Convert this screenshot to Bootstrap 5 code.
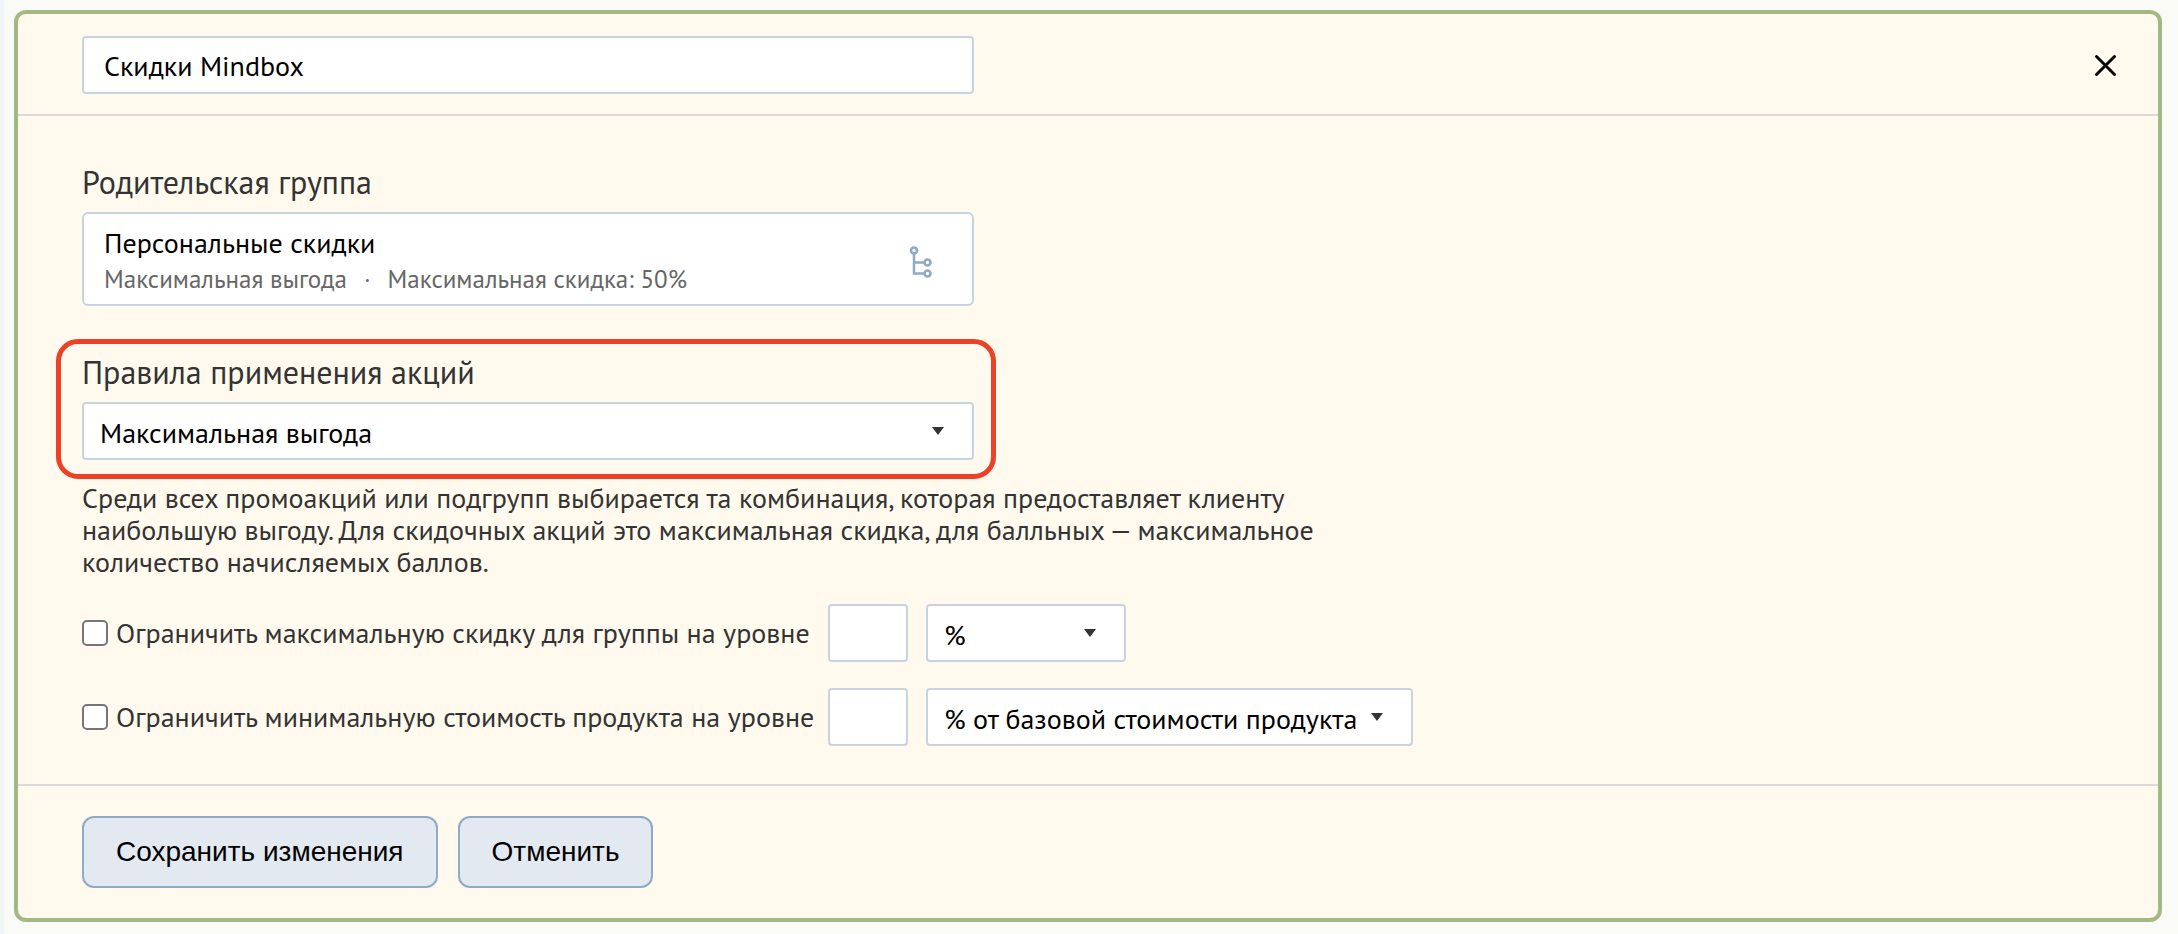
<!DOCTYPE html>
<html lang="ru">
<head>
<meta charset="utf-8">
<meta name="viewport" content="width=device-width, initial-scale=1">
<title>Скидки Mindbox</title>
<link href="https://cdn.jsdelivr.net/npm/bootstrap@5.3.0/dist/css/bootstrap.min.css" rel="stylesheet">
<style>
  body {
    background: #fafbf6;
    color: #333;
    font-family: "PT Sans", Roboto, "Noto Sans", sans-serif;
    font-size: 28px;
    line-height: 32px;
    border-left: 4px solid #f0f4f7;
    padding: 10px 16px 12px 10px;
  }
  .group-card {
    background: #fffaed;
    border: 4px solid #a4b885;
    border-radius: 12px;
  }
  .group-header { padding: 22px 36px 20px 64px; border-bottom: 2px solid #d9d9d9; }
  .group-body { padding: 48px 64px 38px; }
  .group-footer { padding: 30px 64px; gap: 20px; border-top: 2px solid #d9d9d9; }
  .field-width { width: 100%; max-width: 892px; }
  .field-label { font-size: 32px; line-height: 36px; margin-bottom: 12px; }

  .form-control, .form-select, .parent-group {
    color: #000;
    background-color: #fff;
    border: 2px solid #c6d3e1;
    border-radius: 4px;
    font-size: 28px;
    line-height: 34px;
  }
  .form-control { padding: 11px 20px 9px; }
  .form-select {
    padding: 12px 48px 8px 16px;
    background-image: url("data:image/svg+xml,%3csvg xmlns='http://www.w3.org/2000/svg' viewBox='0 0 12 8'%3e%3cpath fill='%23333' d='M0 0h12L6 8z'/%3e%3c/svg%3e");
    background-size: 12px 8px;
    background-position: right 28px center;
  }
  .parent-group { padding: 12px 38px 6px 20px; border-radius: 6px; text-align: left; }
  .parent-note { color: #666; font-size: 25px; line-height: 38px; }
  .note-dot { padding: 0 17px; }
  .tree-icon { width: 26px; height: 34px; }

  .highlighted {
    border: 5px solid #ec4127;
    border-radius: 22px;
    margin: 33px -22px 3px -26px;
    padding: 10px 17px 14px 21px;
    max-width: 940px;
  }
  .rule-hint { max-width: 1240px; margin-bottom: 26px; }

  .limit-row + .limit-row { margin-top: 26px; }
  .limit-check { width: 746px; gap: 8px; }
  .limit-row .form-check-input {
    width: 26px;
    height: 26px;
    border: 2px solid #767676;
    border-radius: 5px;
  }
  .limit-value { width: 80px; margin-right: 18px; }
  .unit-short { width: 200px; }
  .unit-long { width: 487px; }

  .btn-group-action {
    --bs-btn-color: #000;
    --bs-btn-bg: #e2e9f0;
    --bs-btn-border-color: #8fabc4;
    --bs-btn-hover-color: #000;
    --bs-btn-hover-bg: #d5dfe9;
    --bs-btn-hover-border-color: #8fabc4;
    border-width: 2px;
    border-radius: 12px;
    padding: 18px 32px;
    font-family: "Liberation Sans", Arial, sans-serif;
    font-size: 28px;
    line-height: 32px;
  }
</style>
</head>
<body>
<form class="group-card">
  <div class="group-header d-flex align-items-center justify-content-between">
    <input type="text" class="form-control field-width" value="Скидки Mindbox" aria-label="Название группы">
    <button type="button" class="btn p-0 border-0 lh-1" aria-label="Закрыть">
      <svg class="d-block" width="32" height="32" viewBox="0 0 32 32" fill="none" stroke="#000" stroke-width="3" stroke-linecap="round"><path d="M6.500 7.500l18 18M24.500 7.500l-18 18"/></svg>
    </button>
  </div>

  <div class="group-body">
    <div class="field-label" id="parent-label">Родительская группа</div>
    <button type="button" class="parent-group field-width d-flex align-items-center justify-content-between" aria-labelledby="parent-label parent-name">
      <span>
        <span class="d-block" id="parent-name">Персональные скидки</span>
        <span class="parent-note d-flex"><span>Максимальная выгода</span><span class="note-dot">·</span><span>Максимальная скидка: 50%</span></span>
      </span>
      <svg class="tree-icon" viewBox="0 0 26 34" fill="none" stroke="#8fabc4">
        <path stroke-width="2.500" d="M6 9v19.500h10M6 17.500h10"/>
        <circle cx="6" cy="5.500" r="3" stroke-width="2.700"/>
        <circle cx="19.500" cy="17.500" r="3" stroke-width="2.700"/>
        <circle cx="19.500" cy="28.500" r="3" stroke-width="2.700"/>
      </svg>
    </button>

    <div class="highlighted">
      <label class="field-label d-block" for="rule">Правила применения акций</label>
      <select class="form-select" id="rule"><option>Максимальная выгода</option></select>
    </div>
    <p class="rule-hint">Среди всех промоакций или подгрупп выбирается та комбинация, которая предоставляет клиенту наибольшую выгоду. Для скидочных акций это максимальная скидка, для балльных — максимальное количество начисляемых баллов.</p>

    <div class="limit-row d-flex align-items-center">
      <div class="limit-check d-flex align-items-center">
        <input class="form-check-input m-0 flex-shrink-0" type="checkbox" id="limit-max">
        <label for="limit-max">Ограничить максимальную скидку для группы на уровне</label>
      </div>
      <input type="text" class="form-control limit-value" aria-label="Максимальная скидка">
      <select class="form-select unit-short" aria-label="Единица скидки"><option>%</option></select>
    </div>
    <div class="limit-row d-flex align-items-center">
      <div class="limit-check d-flex align-items-center">
        <input class="form-check-input m-0 flex-shrink-0" type="checkbox" id="limit-min">
        <label for="limit-min">Ограничить минимальную стоимость продукта на уровне</label>
      </div>
      <input type="text" class="form-control limit-value" aria-label="Минимальная стоимость">
      <select class="form-select unit-long" aria-label="Единица стоимости"><option>% от базовой стоимости продукта</option></select>
    </div>
  </div>

  <div class="group-footer d-flex flex-wrap">
    <button type="submit" class="btn btn-group-action">Сохранить изменения</button>
    <button type="button" class="btn btn-group-action">Отменить</button>
  </div>
</form>
<script src="https://cdn.jsdelivr.net/npm/bootstrap@5.3.0/dist/js/bootstrap.bundle.min.js"></script>
</body>
</html>
